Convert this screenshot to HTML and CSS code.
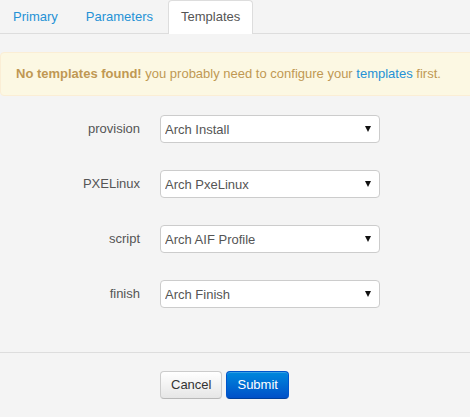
FILE: index.html
```html
<!DOCTYPE html>
<html>
<head>
<meta charset="utf-8">
<link rel="stylesheet" href="styles.css">
</head>
<body>
<div class="page">
  <ul class="tabs">
    <li class="tab"><a href="#">Primary</a></li>
    <li class="tab"><a href="#">Parameters</a></li>
    <li class="tab active"><a href="#">Templates</a></li>
  </ul>
  <div class="alert"><strong>No templates found!</strong> you probably need to configure your <a href="#">templates</a> first.</div>
  <form class="form">
    <div class="rows">
      <div class="row">
        <label class="label">provision</label>
        <div class="select-wrap">
          <select class="select"><option>Arch Install</option></select>
          <span class="caret"></span>
        </div>
      </div>
      <div class="row">
        <label class="label">PXELinux</label>
        <div class="select-wrap">
          <select class="select"><option>Arch PxeLinux</option></select>
          <span class="caret"></span>
        </div>
      </div>
      <div class="row">
        <label class="label">script</label>
        <div class="select-wrap">
          <select class="select"><option>Arch AIF Profile</option></select>
          <span class="caret"></span>
        </div>
      </div>
      <div class="row">
        <label class="label">finish</label>
        <div class="select-wrap">
          <select class="select"><option>Arch Finish</option></select>
          <span class="caret"></span>
        </div>
      </div>
    </div>
    <div class="actions">
      <button type="button" class="btn">Cancel</button>
      <button type="button" class="btn btn-primary">Submit</button>
    </div>
  </form>
</div>
</body>
</html>
```

FILE: styles.css
```css
html, body {
  margin: 0;
  padding: 0;
  background: #f4f4f4;
}
body {
  font-family: "Liberation Sans", Arial, sans-serif;
  font-size: 13px;
  color: #555;
  overflow: hidden;
}
.page {
  width: 470px;
  height: 417px;
}
.tabs {
  list-style: none;
  margin: 0;
  padding: 0;
  display: flex;
  border-bottom: 1px solid #ddd;
}
.tab {
  margin-right: 2px;
  margin-bottom: -1px;
}
.tab a {
  display: block;
  padding: 7px 12px 8px;
  line-height: 18px;
  border: 1px solid transparent;
  border-bottom: 0;
  border-radius: 4px 4px 0 0;
  color: #2592d6;
  text-decoration: none;
}
.tab.active a {
  background: #fff;
  border-color: #ddd;
  color: #555;
}
.alert {
  margin: 18px -10px 0 0;
  padding: 11px 14px 11px 15px;
  line-height: 20px;
  background: #fcf8e3;
  border: 1px solid #fbeed5;
  border-radius: 4px;
  color: #c09853;
}
.alert strong {
  font-weight: bold;
}
.alert a {
  color: #2592d6;
  text-decoration: none;
}
.form {
  margin: 19px 0 0;
}
.rows {
  display: flex;
  flex-direction: column;
  gap: 27px;
}
.row {
  display: flex;
  align-items: center;
}
.label {
  width: 140px;
  text-align: right;
  margin-right: 20px;
  line-height: 28px;
  color: #555;
}
.select-wrap {
  position: relative;
  width: 220px;
  height: 28px;
}
.select {
  appearance: none;
  -webkit-appearance: none;
  display: block;
  width: 220px;
  height: 28px;
  margin: 0;
  padding: 0 20px 0 4px;
  border: 1px solid #ccc;
  border-radius: 4px;
  background: #fff;
  font-family: "Liberation Sans", Arial, sans-serif;
  font-size: 13px;
  color: #555;
  box-sizing: border-box;
}
.caret {
  position: absolute;
  right: 9px;
  top: 11px;
  width: 0;
  height: 0;
  border-left: 3px solid transparent;
  border-right: 3px solid transparent;
  border-top: 6px solid #111;
  pointer-events: none;
}
.actions {
  margin-top: 44px;
  border-top: 1px solid #ddd;
  padding: 18px 0 0 160px;
  display: flex;
  gap: 4px;
}
.btn {
  font-family: "Liberation Sans", Arial, sans-serif;
  font-size: 13px;
  line-height: 18px;
  padding: 4px 10px;
  border-radius: 4px;
  border: 1px solid #ccc;
  border-bottom-color: #b8b8b8;
  background: linear-gradient(#ffffff, #e6e6e6);
  color: #333;
  box-shadow: inset 0 1px 0 rgba(255,255,255,0.2);
  cursor: pointer;
}
.btn-primary {
  border-color: #0055cc #0055cc #003f99;
  background: linear-gradient(#0088dd, #0050c8);
  color: #fff;
}
```
